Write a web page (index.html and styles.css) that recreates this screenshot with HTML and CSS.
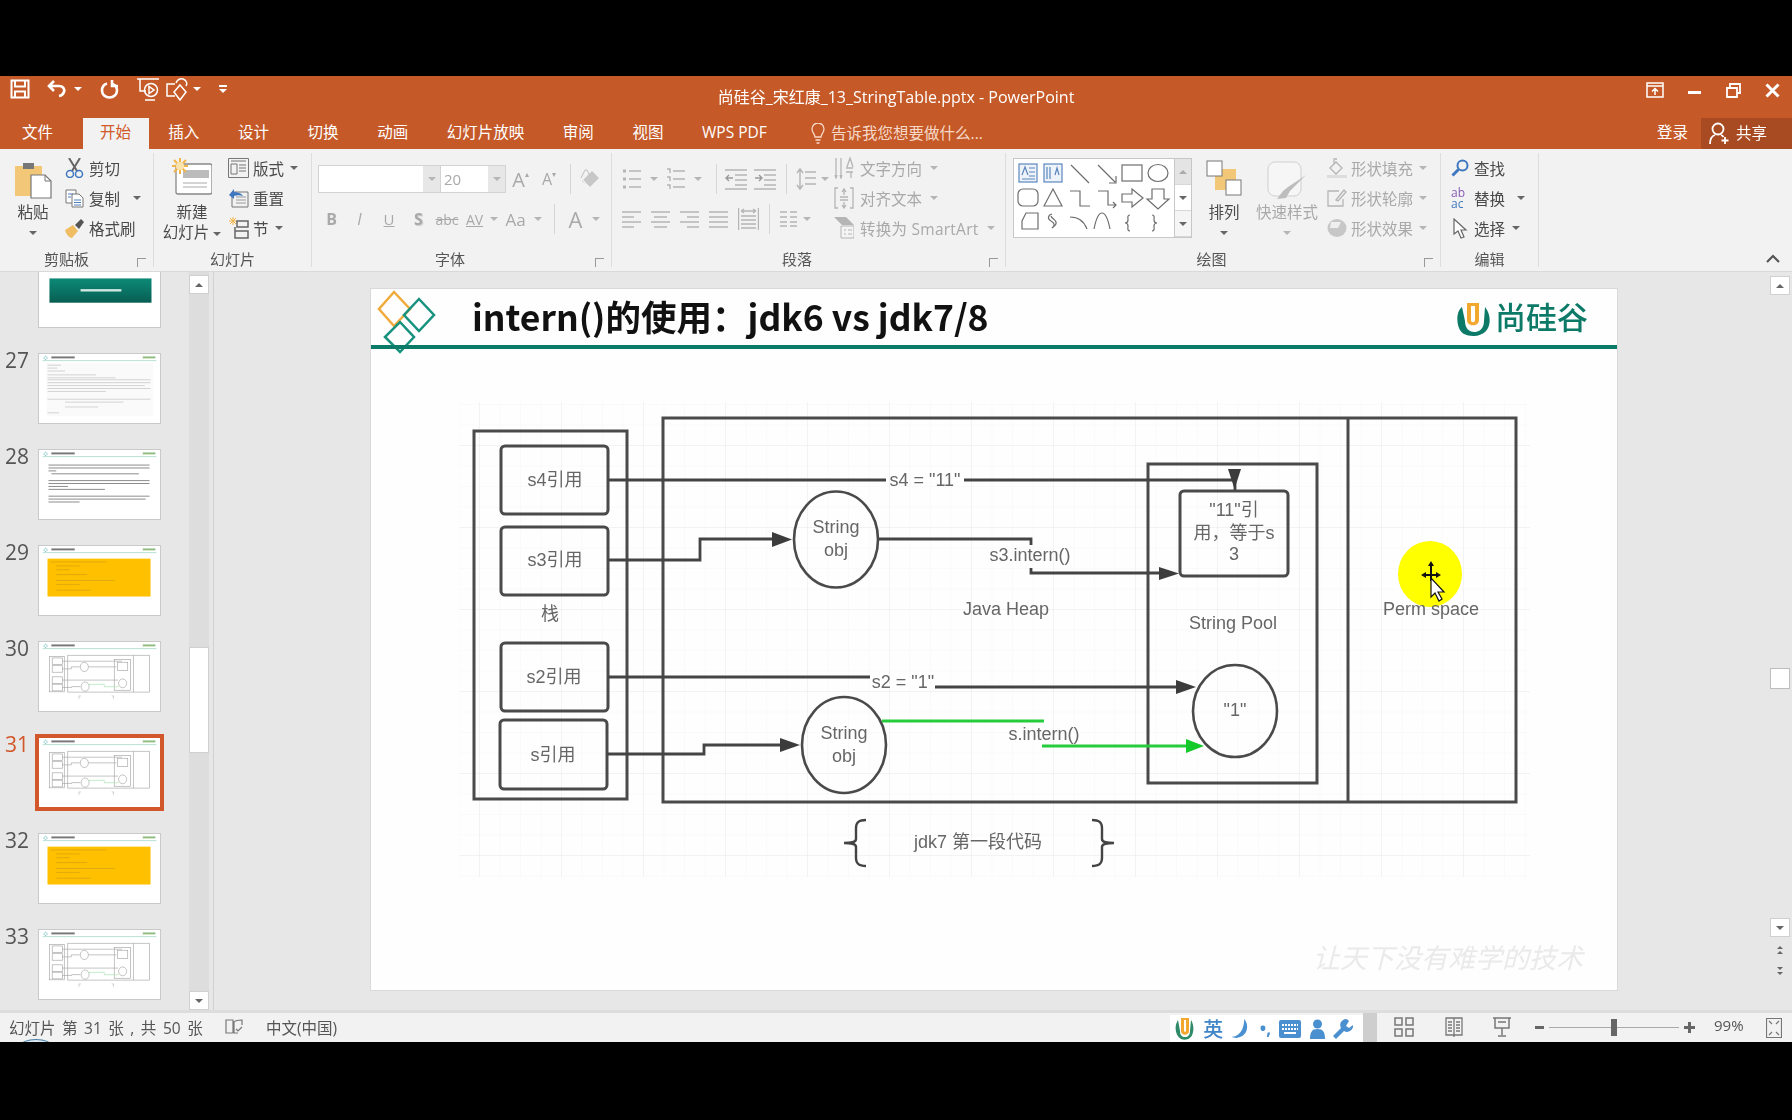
FILE: index.html
```html
<!DOCTYPE html>
<html lang="zh-CN">

<head>
    <meta charset="UTF-8">
    <title>尚硅谷_宋红康_13_StringTable.pptx - PowerPoint</title>
    <link rel="stylesheet" href="styles.css">
</head>

<body>

    <svg class="defs" width="0" height="0">
        <symbol id="thumbHead" viewBox="0 0 123 71">
            <path d="M4 4l2-2 2 2-2 2z" fill="none" stroke="#4aa" stroke-width=".6" />
            <rect x="12" y="2.500" width="24" height="2" fill="#777" />
            <rect x="106" y="2.500" width="13" height="2" fill="#8fbd80" />
            <rect x="3" y="6.500" width="117" height=".8" fill="#a5d6cc" />
        </symbol>
        <symbol id="miniDiagram" viewBox="371 289 1246 701">
            <g fill="none" stroke="#a8a8a8" stroke-width="7">
                <rect x="474" y="431" width="153" height="368" />
                <rect x="663" y="418" width="853" height="384" />
                <path d="M1348 418v384" />
                <rect x="1148" y="464" width="169" height="319" />
                <rect x="501" y="446" width="107" height="68" />
                <rect x="501" y="527" width="107" height="68" />
                <rect x="501" y="643" width="107" height="68" />
                <rect x="501" y="720" width="107" height="69" />
                <ellipse cx="836" cy="540" rx="42" ry="48" />
                <ellipse cx="844" cy="745" rx="42" ry="48" />
                <rect x="1180" y="491" width="108" height="85" />
                <ellipse cx="1235" cy="711" rx="42" ry="46" />
                <path d="M608 480h620M608 560h92v-21h90M879 539h290M608 677h580M607 754h97v-9h90" />
            </g>
            <path d="M882 721h162v25h150" fill="none" stroke="#a5e2ac" stroke-width="7" />
            <path d="M800 842h-20v30M1120 842h20v30" fill="none" stroke="#bbb" stroke-width="7" />
        </symbol>
        <symbol id="yellowBlock" viewBox="0 0 123 71">
            <use href="#thumbHead" width="123" height="71" />
            <rect x="8" y="13" width="106" height="39" fill="#ffc000" />
            <g fill="#dba70f">
                <rect x="11" y="16" width="58" height=".9" />
                <rect x="17" y="20" width="24" height=".9" />
                <rect x="17" y="24" width="14" height=".9" />
                <rect x="17" y="29" width="32" height=".9" />
                <rect x="17" y="35" width="60" height=".9" />
                <rect x="17" y="39" width="24" height=".9" />
                <rect x="17" y="45" width="36" height=".9" />
            </g>
        </symbol>
    </svg>

    <div class="app">
        <div class="black-top"></div>

        <header class="title-bar">
            <div class="qat">
                <svg class="qat-save" width="20" height="20" viewBox="0 0 20 20" fill="none" stroke="#fff" stroke-width="2">
                    <path d="M1.500 1.500h17v17h-17zM5 1.500v6h10v-6M5 18.500v-6h10v6" />
                </svg>
                <svg class="qat-undo" width="20" height="20" viewBox="0 0 20 20" fill="none" stroke="#fff" stroke-width="2.600">
                    <path d="M7 2L2 7l5 5M2.500 7H12c4 0 6 3 5 6-.7 2-2.400 3.500-5 4" />
                </svg>
                <span class="caret white qat-caret1"></span>
                <svg class="qat-redo" width="19" height="20" viewBox="0 0 19 20" fill="none" stroke="#fff" stroke-width="2.600">
                    <path d="M12 1v6h6M13 5.200C15.800 6.500 17 9 17 11.500c0 4-3.300 7-7.500 7S2 15.500 2 11.500C2 8 4 5.500 7 4.500" />
                </svg>
                <svg class="qat-show" width="22" height="24" viewBox="0 0 22 24" fill="none" stroke="#fff" stroke-width="1.500">
                    <path d="M0 2h22M3 2v12h6M8 23h10" />
                    <circle cx="14" cy="13" r="6.500" />
                    <path d="M12 9.500v7l5-3.500z" />
                </svg>
                <svg class="qat-shape" width="24" height="24" viewBox="0 0 24 24" fill="none" stroke="#fff" stroke-width="1.500">
                    <path d="M9 7H1v12h8M10 6c1-3 4-5 7-4 3 1 5 4 3 7" />
                    <path d="M14 8l6 7-6 8-6-8z" />
                </svg>
                <span class="caret white qat-caret2"></span>
                <span class="qat-custom"></span>
            </div>
            <div class="doc-title">尚硅谷_宋红康_13_StringTable.pptx - PowerPoint</div>
            <div class="win-controls">
                <svg width="18" height="16" viewBox="0 0 18 16" fill="none" stroke="#fff" stroke-width="1.500">
                    <path d="M1 1h16v14H1zM1 4h16M9 13V7M6 9.500L9 6.500l3 3" />
                </svg>
                <svg width="14" height="16" viewBox="0 0 14 16" fill="#fff"><rect x="0" y="9" width="13" height="3" /></svg>
                <svg width="15" height="15" viewBox="0 0 15 15" fill="none" stroke="#fff" stroke-width="1.800">
                    <path d="M1 5h10v9H1zM4 5V1h10v9h-3" />
                </svg>
                <svg width="15" height="15" viewBox="0 0 15 15" fill="none" stroke="#fff" stroke-width="3">
                    <path d="M1.500 1.500l12 12M13.500 1.500l-12 12" />
                </svg>
            </div>
        </header>

        <nav class="tabs">
            <span class="tab">文件</span>
            <span class="tab active">开始</span>
            <span class="tab">插入</span>
            <span class="tab">设计</span>
            <span class="tab">切换</span>
            <span class="tab">动画</span>
            <span class="tab">幻灯片放映</span>
            <span class="tab">审阅</span>
            <span class="tab">视图</span>
            <span class="tab">WPS PDF</span>
            <span class="tell-me">
                <svg width="14" height="21" viewBox="0 0 14 21" fill="none" stroke="#f6d9c8" stroke-width="1.300">
                    <path d="M4 14c0-3-3-4-3-8a6 6 0 0 1 12 0c0 4-3 5-3 8zM4.500 17h5M5.500 20h3" />
                </svg>
                告诉我您想要做什么...
            </span>
            <span class="login">登录</span>
            <span class="share">
                <svg width="21" height="23" viewBox="0 0 21 23" fill="none" stroke="#fff" stroke-width="1.800">
                    <circle cx="9" cy="7" r="5.500" />
                    <path d="M1 22c0-5 2-8 5-9M12 13c1 .4 2 1 2.500 2M16 15v7M12.500 18.500h7" />
                </svg>
                共享
            </span>
        </nav>

        <section class="ribbon">
            <div class="group clipboard">
                <div class="group-body">
                    <div class="big-btn paste-btn">
                        <svg width="38" height="40" viewBox="0 0 38 40">
                            <path d="M1 6h27v30H1z" fill="#f2c878" />
                            <rect x="9" y="3" width="11" height="6" fill="#777" />
                            <path d="M17 15h14l6 6v17H17z" fill="#fff" stroke="#777" stroke-width="1.200" />
                            <path d="M31 15v6h6" fill="none" stroke="#777" />
                        </svg>
                        <span>粘贴</span>
                        <span class="caret-line"><span class="caret"></span></span>
                    </div>
                    <div class="small-col">
                        <div class="small-btn">
                            <svg width="19" height="20" viewBox="0 0 19 20" fill="none">
                                <path d="M4 0l8 13M15 0L7 13" stroke="#666" stroke-width="2" />
                                <circle cx="5" cy="16" r="3.500" stroke="#3f78c0" stroke-width="1.500" />
                                <circle cx="14" cy="16" r="3.500" stroke="#3f78c0" stroke-width="1.500" />
                            </svg>
                            <span>剪切</span>
                        </div>
                        <div class="small-btn">
                            <svg width="19" height="19" viewBox="0 0 19 19" fill="#fff" stroke="#777">
                                <path d="M1 1h10v13H1z" />
                                <path d="M7 5h7l4 4v9H7z" />
                                <path d="M3 5h5M3 8h3M9 11h7M9 13.500h7M9 16h7" stroke="#4d7fbd" />
                            </svg>
                            <span>复制</span>
                            <span class="caret copy-caret"></span>
                        </div>
                        <div class="small-btn">
                            <svg width="19" height="20" viewBox="0 0 19 20">
                                <path d="M0 12l8-5 5 6-6 7C4 20 1 16 0 12z" fill="#f0bd62" />
                                <path d="M10 7l6-6 3 3-5 7z" fill="#555" />
                            </svg>
                            <span>格式刷</span>
                        </div>
                    </div>
                </div>
                <div class="group-label">剪贴板</div>
                <span class="launcher"></span>
            </div>

            <div class="group slides">
                <div class="group-body">
                    <div class="big-btn new-slide-btn">
                        <svg width="40" height="40" viewBox="0 0 40 40">
                            <rect x="4" y="6" width="36" height="30" rx="2" fill="#fff" stroke="#888" stroke-width="1.300" />
                            <rect x="11" y="12" width="26" height="8" fill="#bbb" />
                            <path d="M11 25h24M11 29h24" stroke="#aaa" />
                            <path d="M8 0v16M0 8h16M2 2l12 12M14 2L2 14" stroke="#f2b54a" stroke-width="2" />
                            <circle cx="8" cy="8" r="4" fill="#fbe3ac" />
                        </svg>
                        <span>新建</span>
                        <span class="slide-label">幻灯片<span class="caret"></span></span>
                    </div>
                    <div class="small-col">
                        <div class="small-btn">
                            <svg width="21" height="20" viewBox="0 0 21 20" fill="none" stroke="#777">
                                <path d="M.5 .5h20v19H.5zM3 3h15M3 6h6v10H3zM11 7h7M11 10h7M11 13h7" />
                            </svg>
                            <span>版式</span>
                            <span class="caret"></span>
                        </div>
                        <div class="small-btn">
                            <svg width="21" height="20" viewBox="0 0 21 20" fill="none">
                                <path d="M4 4h16v15H4z" stroke="#777" />
                                <path d="M8 9h10M8 12h10M8 15h10" stroke="#999" />
                                <path d="M1 7l5-6v3c4 0 7 1 9 4-3-1-6-1-9 0v3z" fill="#3f78c0" />
                            </svg>
                            <span>重置</span>
                        </div>
                        <div class="small-btn">
                            <svg width="21" height="22" viewBox="0 0 21 22" fill="none">
                                <path d="M5 0v8M1 4h8M2 1l6 6M8 1L2 7" stroke="#f2b54a" />
                                <path d="M9 4h11v6H9zM7 14h13v7H7zM7 10v4" stroke="#666" stroke-width="1.500" />
                            </svg>
                            <span>节</span>
                            <span class="caret"></span>
                        </div>
                    </div>
                </div>
                <div class="group-label">幻灯片</div>
            </div>

            <div class="group font-group">
                <div class="group-body column off">
                    <div class="tool-row first">
                        <span class="font-box"><span class="drop"><span class="caret"></span></span></span>
                        <span class="size-box">20<span class="drop"><span class="caret"></span></span></span>
                        <span class="cell w29 big-a">A<sup>▴</sup></span>
                        <span class="cell w28 small-a">A<sup>▾</sup></span>
                        <span class="cell w14"><span class="sep"></span></span>
                        <span class="cell w26">
                            <svg width="20" height="20" viewBox="0 0 20 20">
                                <path d="M2 12L12 2l7 7-9 9z" fill="#c7c7c7" />
                                <path d="M3 11l6 7" stroke="#fff" />
                                <path d="M1 9L5 1h2l3 6" fill="none" stroke="#c0c0c0" />
                            </svg>
                        </span>
                    </div>
                    <div class="tool-row second">
                        <span class="cell w27 txt-b">B</span>
                        <span class="cell w29 txt-i">I</span>
                        <span class="cell w30 txt-u">U</span>
                        <span class="cell w29 txt-s">S</span>
                        <span class="cell w28 txt-abc">abc</span>
                        <span class="cell w27 txt-av">AV</span>
                        <span class="cell w12"><span class="caret"></span></span>
                        <span class="cell w31 txt-aa">Aa</span>
                        <span class="cell w14"><span class="caret"></span></span>
                        <span class="cell w18"><span class="sep"></span></span>
                        <span class="cell w25 txt-bigA">A</span>
                        <span class="cell w16"><span class="caret"></span></span>
                    </div>
                </div>
                <div class="group-label">字体</div>
                <span class="launcher"></span>
            </div>

            <div class="group para">
                <div class="group-body">
                    <div class="column para-left off">
                        <div class="tool-row first">
                            <svg class="ico" width="20" height="22" viewBox="0 0 20 22" stroke="#b5b5b5" stroke-width="1.400">
                                <path d="M7 3h12M7 11h12M7 19h12" />
                                <path d="M1 3h3M1 11h3M1 19h3" stroke-width="3" />
                            </svg>
                            <span class="cell w24"><span class="caret"></span></span>
                            <svg class="ico" width="20" height="22" viewBox="0 0 20 22" stroke="#b5b5b5" stroke-width="1.400">
                                <path d="M7 3h12M7 11h12M7 19h12M1 1h3v4M1 9h3v4M1 17h3v4" fill="none" />
                            </svg>
                            <span class="cell w24"><span class="caret"></span></span>
                            <span class="cell w12"><span class="sep"></span></span>
                            <svg class="ico gap-l" width="22" height="22" viewBox="0 0 22 22" stroke="#b5b5b5" stroke-width="1.400" fill="none">
                                <path d="M0 2h22M10 7h12M10 12h12M10 17h12M0 21h22" />
                                <path d="M8 10H1M4 7l-3 3 3 3" stroke="#9a9a9a" />
                            </svg>
                            <svg class="ico gap-m" width="22" height="22" viewBox="0 0 22 22" stroke="#b5b5b5" stroke-width="1.400" fill="none">
                                <path d="M0 2h22M10 7h12M10 12h12M10 17h12M0 21h22" />
                                <path d="M1 10h7M5 7l3 3-3 3" stroke="#9a9a9a" />
                            </svg>
                            <span class="cell w20"><span class="sep"></span></span>
                            <svg class="ico" width="20" height="24" viewBox="0 0 20 24" stroke="#b5b5b5" stroke-width="1.400" fill="none">
                                <path d="M9 5h11M9 11h11M9 17h11M4 2v20M1 6l3-4 3 4M1 18l3 4 3-4" />
                            </svg>
                            <span class="cell w18"><span class="caret"></span></span>
                        </div>
                        <div class="tool-row second">
                            <svg class="ico" width="19" height="18" viewBox="0 0 19 18" stroke="#b5b5b5" stroke-width="1.400"><path d="M0 2h19M0 7h12M0 12h19M0 17h12" /></svg>
                            <svg class="ico gap-a" width="19" height="18" viewBox="0 0 19 18" stroke="#b5b5b5" stroke-width="1.400"><path d="M0 2h19M3 7h13M0 12h19M3 17h13" /></svg>
                            <svg class="ico gap-a" width="19" height="18" viewBox="0 0 19 18" stroke="#b5b5b5" stroke-width="1.400"><path d="M0 2h19M7 7h12M0 12h19M7 17h12" /></svg>
                            <svg class="ico gap-a" width="19" height="18" viewBox="0 0 19 18" stroke="#b5b5b5" stroke-width="1.400"><path d="M0 2h19M0 7h19M0 12h19M0 17h19" /></svg>
                            <svg class="ico gap-a" width="21" height="24" viewBox="0 0 21 24" stroke="#b5b5b5" stroke-width="1.400" fill="none"><path d="M.5 1v22M20.500 1v22M3 9h15M3 13h15M3 17h15M3 21h15M3 4h15M3 4l3-2M3 4l3 2M18 4l-3-2M18 4l-3 2" /></svg>
                            <span class="cell w21"><span class="sep"></span></span>
                            <svg class="ico" width="17" height="16" viewBox="0 0 17 16" stroke="#b5b5b5" stroke-width="1.400"><path d="M0 1h7M10 1h7M0 6h7M10 6h7M0 11h7M10 11h7M0 15h7M10 15h7" /></svg>
                            <span class="cell w20"><span class="caret"></span></span>
                        </div>
                    </div>
                    <div class="small-col off para-right">
                        <div class="small-btn">
                            <svg width="20" height="22" viewBox="0 0 20 22" fill="none" stroke="#b5b5b5" stroke-width="1.300">
                                <path d="M2 1v20M7 1v20M1 18l1 3 1-3M6 18l1 3 1-3M12 11h7M12 15h7M13 10l3-9 3 9M17 15v6" />
                            </svg>
                            <span>文字方向</span>
                            <span class="caret"></span>
                        </div>
                        <div class="small-btn">
                            <svg width="20" height="22" viewBox="0 0 20 22" fill="none" stroke="#b5b5b5" stroke-width="1.300">
                                <path d="M4 1H1v20h3M16 1h3v20h-3M6 10h8M6 13h8M10 2v6M8 5l2-3 2 3M10 15v6M8 18l2 3 2-3" />
                            </svg>
                            <span>对齐文本</span>
                            <span class="caret"></span>
                        </div>
                        <div class="small-btn">
                            <svg width="20" height="22" viewBox="0 0 20 22">
                                <path d="M0 0h12l8 8H8z" fill="#b5b5b5" />
                                <path d="M7 9h13v12H7z" fill="#f4f4f4" stroke="#b5b5b5" />
                                <path d="M10 13h2M14 13h4M10 17h2M14 17h4" stroke="#b5b5b5" />
                            </svg>
                            <span class="smartart">转换为 SmartArt</span>
                            <span class="caret"></span>
                        </div>
                    </div>
                </div>
                <div class="group-label">段落</div>
                <span class="launcher"></span>
            </div>

            <div class="group drawing">
                <div class="group-body">
                    <div class="gallery">
                        <svg class="gallery-shapes" width="160" height="80" viewBox="0 0 160 80" fill="none" stroke="#6e6e6e" stroke-width="1.200">
                            <rect x="5" y="6" width="18" height="18" fill="#eef3fa" stroke="#5a86be" />
                            <path d="M8 17l3-8 3 8M15 10h6M15 14h6M15 18h6M8 21h13" stroke="#5a86be" />
                            <rect x="30" y="6" width="18" height="18" fill="#eef3fa" stroke="#5a86be" />
                            <path d="M33 9v12M36 9v12M41 17l2-7 2 7" stroke="#5a86be" />
                            <path d="M57 7l18 18M84 7l17 17M102 18v7h-7" />
                            <rect x="108" y="7" width="20" height="16" />
                            <ellipse cx="144" cy="15" rx="10" ry="8.500" />
                            <rect x="4" y="31" width="20" height="17" rx="5" />
                            <path d="M30 48l9-17 9 17z" />
                            <path d="M56 33h10v15h10M84 33h10v14h8M99 44l3 3-3 3" />
                            <path d="M108 36h10v-5l11 9-11 9v-5h-10z" />
                            <path d="M138 31h12v10h5l-11 10-11-10h5z" />
                            <path d="M8 71v-8l4-8h12v16zM8 71h16" />
                            <path d="M38 56c-4 1-5 5-1 7s4 5 1 7c2-2 5-3 4-6s-4-3-5-6" />
                            <path d="M56 59c8 0 14 4 17 12M80 71c2-10 5-16 8-16s6 6 8 16" />
                            <path d="M116 57c-3 0-2 3-2 5s-1 3-3 3c2 0 3 1 3 3s-1 5 2 5M138 57c3 0 2 3 2 5s1 3 3 3c-2 0-3 1-3 3s1 5-2 5" />
                        </svg>
                        <div class="gallery-scroll">
                            <span class="off-cell"><span class="caret up"></span></span>
                            <span><span class="caret"></span></span>
                            <span class="more"><span class="caret"></span></span>
                        </div>
                    </div>
                    <div class="big-btn arrange-btn">
                        <svg width="36" height="36" viewBox="0 0 36 36">
                            <rect x="9" y="9" width="21" height="21" fill="#f2c878" />
                            <rect x="1" y="1" width="15" height="15" fill="#fff" stroke="#777" />
                            <rect x="20" y="20" width="15" height="15" fill="#fff" stroke="#777" />
                        </svg>
                        <span>排列</span>
                        <span class="caret-line"><span class="caret"></span></span>
                    </div>
                    <div class="big-btn quick-btn off">
                        <svg width="40" height="38" viewBox="0 0 40 38">
                            <rect x="1" y="1" width="33" height="34" rx="7" fill="#f6f6f6" stroke="#d0d0d0" />
                            <path d="M39 14L23 30l-4 7-9 1 6-8 5-4z" fill="#bdbdbd" />
                        </svg>
                        <span>快速样式</span>
                        <span class="caret-line"><span class="caret"></span></span>
                    </div>
                    <div class="small-col off shape-col">
                        <div class="small-btn">
                            <svg width="20" height="20" viewBox="0 0 20 20" fill="none" stroke="#b5b5b5" stroke-width="1.300">
                                <path d="M3 10l6-6 6 6-6 6zM7 6V1h3" />
                                <rect x="0" y="17" width="20" height="3" fill="#ddd" stroke="none" />
                            </svg>
                            <span>形状填充</span>
                            <span class="caret"></span>
                        </div>
                        <div class="small-btn">
                            <svg width="20" height="20" viewBox="0 0 20 20" fill="none" stroke="#b5b5b5" stroke-width="1.300">
                                <path d="M12 3H1v15h15v-7M9 12l8-10 2 2-8 9z" />
                            </svg>
                            <span>形状轮廓</span>
                            <span class="caret"></span>
                        </div>
                        <div class="small-btn">
                            <svg width="20" height="20" viewBox="0 0 20 20">
                                <ellipse cx="10" cy="10" rx="9.500" ry="9" fill="#c7c7c7" />
                                <path d="M4 4h10l-3 6H3z" fill="#efefef" />
                            </svg>
                            <span>形状效果</span>
                            <span class="caret"></span>
                        </div>
                    </div>
                </div>
                <div class="group-label">绘图</div>
                <span class="launcher"></span>
            </div>

            <div class="group editing">
                <div class="group-body">
                    <div class="small-col">
                        <div class="small-btn">
                            <svg width="18" height="18" viewBox="0 0 18 18" fill="none" stroke="#3f78c0">
                                <circle cx="11.500" cy="6.500" r="5" stroke-width="2" />
                                <path d="M7.500 10.500L1.500 16.500" stroke-width="3" />
                            </svg>
                            <span>查找</span>
                        </div>
                        <div class="small-btn">
                            <span class="replace-icon"><b class="ab">ab</b><b class="ac">ac</b></span>
                            <span>替换</span>
                            <span class="caret replace-caret"></span>
                        </div>
                        <div class="small-btn">
                            <svg width="18" height="21" viewBox="0 0 18 21" fill="#fff" stroke="#666" stroke-width="1.200">
                                <path d="M3 1v15l4-3 3 7 3-1-3-7h5z" />
                            </svg>
                            <span>选择</span>
                            <span class="caret"></span>
                        </div>
                    </div>
                </div>
                <div class="group-label">编辑</div>
            </div>

            <svg class="collapse" width="14" height="9" viewBox="0 0 14 9" fill="none" stroke="#555" stroke-width="2.200">
                <path d="M1 8l6-6 6 6" />
            </svg>
        </section>

        <main class="workspace">
            <aside class="thumb-panel">
                <div class="thumb-list">
                    <div class="thumb-row">
                        <span class="num"></span>
                        <div class="thumb">
                            <svg viewBox="0 0 123 71">
                                <defs>
                                    <linearGradient id="teal" x1="0" y1="0" x2="0" y2="1">
                                        <stop offset="0" stop-color="#0d8a78" />
                                        <stop offset="1" stop-color="#075e52" />
                                    </linearGradient>
                                </defs>
                                <rect x="10" y="21" width="105" height="25" fill="url(#teal)" />
                                <rect x="42" y="32" width="42" height="2.500" fill="#cfe6e0" />
                            </svg>
                        </div>
                    </div>
                    <div class="thumb-row">
                        <span class="num">27</span>
                        <div class="thumb">
                            <svg viewBox="0 0 123 71">
                                <use href="#thumbHead" width="123" height="71" />
                                <rect x="7" y="9" width="110" height="55" fill="#fafafa" />
                                <g fill="#d2d2d2">
                                    <rect x="8" y="11" width="14" height="1" /><rect x="8" y="14" width="10" height="1" /><rect x="8" y="17" width="18" height="1" />
                                    <rect x="8" y="21" width="50" height="1" /><rect x="8" y="24" width="70" height="1" /><rect x="8" y="26" width="106" height="1" />
                                    <rect x="8" y="29" width="106" height="1" /><rect x="8" y="32" width="100" height="1" /><rect x="8" y="35" width="106" height="1" />
                                    <rect x="8" y="38" width="60" height="1" /><rect x="8" y="46" width="106" height="1" /><rect x="26" y="49" width="60" height="1" />
                                    <rect x="26" y="54" width="34" height="1" /><rect x="8" y="60" width="12" height="1" />
                                </g>
                            </svg>
                        </div>
                    </div>
                    <div class="thumb-row">
                        <span class="num">28</span>
                        <div class="thumb">
                            <svg viewBox="0 0 123 71">
                                <use href="#thumbHead" width="123" height="71" />
                                <g fill="#8a8a8a">
                                    <rect x="9" y="15" width="104" height="1" /><rect x="9" y="18" width="104" height="1" /><rect x="9" y="21" width="8" height="1" />
                                    <rect x="12" y="24" width="90" height="1" /><rect x="9" y="31" width="104" height="1" /><rect x="9" y="34" width="104" height="1" />
                                    <rect x="9" y="37" width="20" height="1" /><rect x="9" y="40" width="58" height="1" /><rect x="9" y="47" width="104" height="1" />
                                    <rect x="9" y="50" width="100" height="1" /><rect x="9" y="53" width="32" height="1" />
                                </g>
                            </svg>
                        </div>
                    </div>
                    <div class="thumb-row">
                        <span class="num">29</span>
                        <div class="thumb"><svg viewBox="0 0 123 71"><use href="#yellowBlock" width="123" height="71" /></svg></div>
                    </div>
                    <div class="thumb-row">
                        <span class="num">30</span>
                        <div class="thumb">
                            <svg viewBox="0 0 123 71">
                                <use href="#thumbHead" width="123" height="71" />
                                <use href="#miniDiagram" width="123" height="71" />
                            </svg>
                        </div>
                    </div>
                    <div class="thumb-row selected">
                        <span class="num">31</span>
                        <div class="thumb">
                            <svg viewBox="0 0 123 71">
                                <use href="#thumbHead" width="123" height="71" />
                                <use href="#miniDiagram" width="123" height="71" />
                            </svg>
                        </div>
                    </div>
                    <div class="thumb-row">
                        <span class="num">32</span>
                        <div class="thumb"><svg viewBox="0 0 123 71"><use href="#yellowBlock" width="123" height="71" /></svg></div>
                    </div>
                    <div class="thumb-row">
                        <span class="num">33</span>
                        <div class="thumb">
                            <svg viewBox="0 0 123 71">
                                <use href="#thumbHead" width="123" height="71" />
                                <use href="#miniDiagram" width="123" height="71" />
                            </svg>
                        </div>
                    </div>
                </div>
                <div class="thumb-scroll">
                    <span class="scroll-btn"><span class="caret up dark"></span></span>
                    <span class="scroll-thumb"></span>
                    <span class="scroll-btn bottom"><span class="caret dark"></span></span>
                </div>
            </aside>

            <div class="canvas">
                <div class="slide">
                    <svg class="slide-svg" width="1246" height="701" viewBox="371 289 1246 701">
                        <defs>
                            <pattern id="minorGrid" x="479" y="445" width="20.500" height="20.500" patternUnits="userSpaceOnUse">
                                <path d="M0 0v20.500M0 0h20.500" stroke="#f6f6f6" fill="none" />
                            </pattern>
                            <pattern id="majorGrid" x="479" y="445" width="82" height="82" patternUnits="userSpaceOnUse">
                                <path d="M0 0v82M0 0h82" stroke="#ebebeb" fill="none" />
                            </pattern>
                        </defs>

                        <!-- header -->
                        <g fill="none" stroke-width="2.500">
                            <path d="M394 292l16 17-16 17-15-17z" stroke="#f0ab3c" />
                            <path d="M419 299l15 16-15 16-15-16z" stroke="#17927f" />
                            <path d="M400 322l14 15-14 15-15-15z" stroke="#17927f" />
                        </g>
                        <text class="slide-title" x="472" y="331">intern()的使用：jdk6 vs jdk7/8</text>
                        <path d="M1462 307c-7 5-6 23 2 27 8 4 20 2 24-6 3-6 2-15-3-21l-1 14c0 8-5 11-10 11s-9-4-9-11z" fill="#0d7a68" />
                        <path d="M1467 303h12v17c0 7-12 7-12 0z" fill="#f2a72e" />
                        <path d="M1471 306h4v14c0 3-4 3-4 0z" fill="#fff" />
                        <text class="logo-text" x="1495" y="329">尚硅谷</text>
                        <rect x="371" y="345" width="1246" height="4" fill="#0c7a68" />

                        <!-- diagram grid -->
                        <rect x="459" y="402" width="1071" height="475" fill="url(#minorGrid)" />
                        <rect x="459" y="402" width="1071" height="475" fill="url(#majorGrid)" />

                        <!-- containers -->
                        <g fill="none" stroke="#4a4a4a" stroke-width="3">
                            <rect x="474" y="431" width="153" height="368" />
                            <rect x="663" y="418" width="853" height="384" />
                            <path d="M1348 418v384" />
                            <rect x="1148" y="464" width="169" height="319" />
                            <rect x="501" y="446" width="107" height="68" rx="4" />
                            <rect x="501" y="527" width="107" height="68" rx="4" />
                            <rect x="501" y="643" width="107" height="68" rx="4" />
                            <rect x="500" y="720" width="107" height="69" rx="4" />
                            <rect x="1180" y="491" width="108" height="85" rx="4" />
                            <ellipse cx="836" cy="539.500" rx="42" ry="48" stroke-width="2.600" />
                            <ellipse cx="844" cy="745" rx="42" ry="48" stroke-width="2.600" />
                            <ellipse cx="1235" cy="711" rx="42" ry="46" stroke-width="2.600" />
                        </g>

                        <!-- connectors -->
                        <g fill="none" stroke="#444" stroke-width="2.800">
                            <path d="M608 480h278M964 480h271v10" />
                            <path d="M608 560h92v-21h74" />
                            <path d="M879 539h152v6M1031 568v5h130" />
                            <path d="M608 677h262M935 687h243" />
                            <path d="M607 754h97v-9h78" />
                            <path d="M866 820c-8 0-10 3-10 8v11c0 3-3 4-12 4 9 0 12 1 12 4v11c0 5 2 8 10 8" stroke-width="2.400" />
                            <path d="M1092 820c8 0 10 3 10 8v11c0 3 3 4 12 4-9 0-12 1-12 4v11c0 5-2 8-10 8" stroke-width="2.400" />
                        </g>
                        <g fill="#3c3c3c">
                            <path d="M772 532l20 7.500-20 7.500z" />
                            <path d="M1159 567l20 6.500-20 6.500z" />
                            <path d="M1228 469h13l-6.500 20z" />
                            <path d="M1176 680l20 7-20 7z" />
                            <path d="M780 738l20 7-20 7z" />
                        </g>
                        <path d="M882 721h162M1042 746h146" fill="none" stroke="#26cc3c" stroke-width="3" />
                        <path d="M1186 739l18 7-18 7z" fill="#14c92a" />

                        <!-- labels -->
                        <g class="diagram-text" text-anchor="middle">
                            <text x="555" y="486">s4引用</text>
                            <text x="555" y="566">s3引用</text>
                            <text x="550" y="620">栈</text>
                            <text x="554" y="683">s2引用</text>
                            <text x="553" y="761">s引用</text>
                            <text x="925" y="486">s4 = "11"</text>
                            <text x="903" y="688">s2 = "1"</text>
                            <text x="836" y="533">String</text>
                            <text x="836" y="556">obj</text>
                            <text x="844" y="739">String</text>
                            <text x="844" y="762">obj</text>
                            <text x="1030" y="561">s3.intern()</text>
                            <text x="1044" y="740">s.intern()</text>
                            <text x="1006" y="615">Java Heap</text>
                            <text x="1233" y="629">String Pool</text>
                            <text x="1234" y="516">"11"引</text>
                            <text x="1234" y="539">用，等于s</text>
                            <text x="1234" y="560">3</text>
                            <text x="1235" y="716">"1"</text>
                            <text x="978" y="848">jdk7 第一段代码</text>
                        </g>

                        <text class="watermark" x="1313" y="968">让天下没有难学的技术</text>

                        <!-- pointer highlight -->
                        <ellipse cx="1430" cy="574" rx="32" ry="33" fill="#ffff00" />
                        <text class="diagram-text" x="1431" y="615" text-anchor="middle">Perm space</text>
                        <g fill="#111">
                            <path d="M1431 561l3 5h-6zM1421 575l5-3v6zM1441 575l-5-3v6z" />
                            <path d="M1430 565h2v16h-2zM1424 574h14v2h-14z" />
                        </g>
                        <path d="M1431 578v19l4-4 4 8 3-2-4-7h6z" fill="#fff" stroke="#111" stroke-width="1.200" />
                    </svg>
                </div>
                <div class="side-scroll">
                    <span class="scroll-btn"><span class="caret up dark"></span></span>
                    <span class="side-thumb"></span>
                    <span class="scroll-btn"><span class="caret dark"></span></span>
                    <span class="page-btn"><span class="caret up dark small"></span><span class="caret up dark small"></span></span>
                    <span class="page-btn"><span class="caret dark small"></span><span class="caret dark small"></span></span>
                </div>
            </div>
        </main>

        <footer class="status-bar">
            <span class="status-count">幻灯片 第 31 张 , 共 50 张</span>
            <svg class="status-note" width="18" height="16" viewBox="0 0 18 16" fill="none" stroke="#777" stroke-width="1.200">
                <path d="M1 1h7v13H1zM9 14V3c1-1 4-2 8-2v5M9 14h4M17 8l-4 4-2-2" />
            </svg>
            <span class="status-lang">中文(中国)</span>
            <span class="taskbar-arc"></span>
            <div class="ime">
                <svg width="20" height="24" viewBox="0 0 20 24">
                    <path d="M3 3c-4 6-3 15 3 19 5 2 11 0 12-7 1-4 0-9-2-12l-1 11c0 4-2 6-5 6s-5-2-5-6z" fill="#2f8a68" />
                    <path d="M6 1h8v13c0 5-8 5-8 0z" fill="#f2a72e" />
                    <path d="M9 3h2v11c0 1-2 1-2 0z" fill="#fff" />
                </svg>
                <span class="ime-lang">英</span>
                <svg width="20" height="20" viewBox="0 0 18 18" fill="#4a90d0"><path d="M11 0c5 6 3 16-7 17-2 0-3 0-4-1 6 0 11-6 11-16z" /></svg>
                <span class="ime-punct">•,</span>
                <svg width="22" height="18" viewBox="0 0 22 18">
                    <rect width="22" height="18" rx="2" fill="#4a90d0" />
                    <path d="M3 5h16M3 9h16" stroke="#fff" stroke-width="2" stroke-dasharray="2 1" />
                    <path d="M5 13h12" stroke="#fff" stroke-width="2" />
                </svg>
                <svg width="15" height="20" viewBox="0 0 15 20" fill="#4a90d0"><circle cx="7.500" cy="5" r="4.500" /><path d="M0 20c0-7 2-10 7.500-10S15 13 15 20z" /></svg>
                <svg width="20" height="20" viewBox="0 0 20 20" fill="#4a90d0"><path d="M13 0a6 6 0 0 0-5 9L0 17l3 3 8-8a6 6 0 0 0 9-6l-4 3-3-2 3-5c-1-1-2-2-3-2z" /></svg>
            </div>
            <span class="ime-grip"></span>
            <div class="view-btns">
                <svg width="20" height="20" viewBox="0 0 20 20" fill="none" stroke="#777" stroke-width="1.500">
                    <path d="M1 1h7v7H1zM12 1h7v7h-7zM1 12h7v7H1zM12 12h7v7h-7z" />
                </svg>
                <svg width="18" height="20" viewBox="0 0 18 20" fill="none" stroke="#777" stroke-width="1.300">
                    <path d="M1 1h16v17H1zM9 1v19M3 5h4M3 8h4M3 11h4M3 14h4M11 5h4M11 8h4M11 11h4M11 14h4" />
                </svg>
                <svg width="18" height="20" viewBox="0 0 18 20" fill="none" stroke="#777" stroke-width="1.500">
                    <path d="M0 1h18M2 1v10h14V1M9 11v7M5 19h8M5 5h8" />
                </svg>
            </div>
            <div class="zoom-ctl">
                <span class="zoom-minus"></span>
                <span class="zoom-track"><span class="zoom-knob"></span></span>
                <span class="zoom-plus"></span>
            </div>
            <span class="zoom-pct">99%</span>
            <svg class="fit-btn" width="16" height="20" viewBox="0 0 16 20" fill="none" stroke="#777" stroke-width="1.200">
                <path d="M.5 .5h15v19H.5z" />
                <path d="M3 3l3 3M13 3l-3 3M3 17l3-3M13 17l-3-3" />
            </svg>
        </footer>
    </div>

</body>

</html>
```

FILE: styles.css
```css
* {
    box-sizing: border-box;
}

body {
    margin: 0;
    background: #000;
    font-family: "Open Sans", "Noto Sans CJK SC", sans-serif;
    color: #444;
}

.defs {
    position: absolute;
}

.app {
    width: 1792px;
    height: 1120px;
    overflow: hidden;
    display: flex;
    flex-direction: column;
    filter: blur(0.6px);
}

.black-top {
    height: 76px;
    flex: none;
}

/* title bar */
.title-bar {
    height: 42px;
    flex: none;
    background: #c55a28;
    display: flex;
    align-items: center;
    position: relative;
    color: #fff;
}

.qat {
    display: flex;
    align-items: center;
    margin-left: 10px;
    margin-top: -16px;
}

.qat-undo {
    margin-left: 17px;
}

.qat-caret1 {
    margin-left: 7px;
}

.qat-redo {
    margin-left: 18px;
}

.qat-show {
    margin-left: 18px;
}

.qat-shape {
    margin-left: 7px;
}

.qat-caret2 {
    margin-left: 3px;
}

.qat-custom {
    width: 8px;
    height: 8px;
    margin-left: 18px;
    border-top: 2px solid #fff;
    position: relative;
}

.qat-custom::after {
    content: "";
    position: absolute;
    left: 0;
    top: 2px;
    border: 4px solid transparent;
    border-top-color: #fff;
}

.doc-title {
    position: absolute;
    left: 0;
    right: 0;
    top: 9px;
    text-align: center;
    font-size: 16px;
    line-height: 24px;
    color: #fff;
}

.win-controls {
    margin-left: auto;
    display: flex;
    align-items: center;
    gap: 24px;
    margin-right: 12px;
    margin-top: -14px;
}

/* tabs */
.tabs {
    height: 31px;
    flex: none;
    background: #c55a28;
    display: flex;
    color: #fff;
    font-size: 15.5px;
    line-height: 29px;
}

.tab {
    padding: 0 19.3px;
    white-space: nowrap;
}

.tab:first-child {
    width: 83px;
    padding: 0 0 0 22px;
}

.tab.active {
    background: #f1f2f1;
    color: #d1592a;
    width: 66px;
    padding: 0 17px;
}

.tell-me {
    margin-left: 25px;
    display: flex;
    align-items: center;
    gap: 6px;
    font-size: 15.5px;
    color: #f6d9c8;
}

.login {
    margin-left: auto;
    margin-right: 13px;
}

.share {
    width: 91px;
    background: #a94b22;
    display: flex;
    align-items: center;
    padding-left: 8px;
    gap: 6px;
}

/* ribbon */
.ribbon {
    height: 123px;
    flex: none;
    background: #f1f2f1;
    border-bottom: 1px solid #d8d9d8;
    display: flex;
    padding-top: 4px;
    position: relative;
    font-size: 15.5px;
    color: #4a4a4a;
}

.group {
    height: 114px;
    display: flex;
    flex-direction: column;
    position: relative;
    border-right: 1px solid #dcdddc;
}

.group-body {
    height: 97px;
    display: flex;
}

.group-label {
    height: 17px;
    line-height: 19px;
    text-align: center;
    font-size: 15px;
    color: #555;
}

.clipboard .group-label {
    padding-right: 20px;
}

.font-group .group-label,
.para .group-label,
.drawing .group-label {
    padding-right: 23px;
}

.launcher {
    position: absolute;
    right: 7px;
    bottom: 0;
    width: 9px;
    height: 9px;
    border-left: 1px solid #999;
    border-top: 1px solid #999;
}

.clipboard {
    width: 154px;
}

.slides {
    width: 158px;
}

.font-group {
    width: 300px;
}

.para {
    width: 394px;
}

.drawing {
    width: 435px;
}

.editing {
    width: 98px;
}

.big-btn {
    display: flex;
    flex-direction: column;
    align-items: center;
    line-height: 20px;
    white-space: nowrap;
    flex: none;
}

.big-btn svg {
    height: 40px;
    margin-bottom: 8px;
    flex: none;
}

.paste-btn {
    width: 56px;
    margin-left: 5px;
    padding-top: 7px;
}

.paste-btn svg {
    margin-bottom: 2px;
}

.new-slide-btn {
    width: 68px;
    margin-left: 4px;
    padding-top: 5px;
}

.new-slide-btn svg {
    margin-bottom: 4px;
}

.caret-line {
    line-height: 18px;
    display: block;
}

.slide-label .caret {
    margin-left: 4px;
}

.small-col {
    display: flex;
    flex-direction: column;
    flex: none;
}

.clipboard .small-col {
    margin-left: 4px;
}

.slides .small-col {
    margin-left: 2px;
}

.slides .small-btn {
    gap: 4px;
}

.small-btn {
    height: 30px;
    display: flex;
    align-items: center;
    gap: 5px;
    white-space: nowrap;
}

.small-btn .caret {
    margin-left: 2px;
}

.small-btn svg {
    flex: none;
}

.off,
.off .small-btn {
    color: #a9a9a9;
}

.smartart {
    letter-spacing: 0.25px;
}

.caret {
    display: inline-block;
    width: 0;
    height: 0;
    border: 4px solid transparent;
    border-top-color: #666;
    border-bottom-width: 0;
    vertical-align: middle;
}

.caret.up {
    border-top-width: 0;
    border-bottom-width: 4px;
    border-top-color: transparent;
    border-bottom-color: #aaa;
}

.caret.white {
    border-top-color: #fff;
}

.off .caret {
    border-top-color: #b5b5b5;
}

.small-btn .copy-caret {
    margin-left: 8px;
}

.small-btn .replace-caret {
    margin-left: 7px;
}

/* font group */
.column {
    flex-direction: column;
    display: flex;
}

.font-group .group-body {
    padding-left: 6px;
}

.tool-row {
    display: flex;
    align-items: center;
    flex: none;
}

.tool-row.first {
    height: 28px;
    margin-top: 12px;
}

.tool-row.second {
    height: 28px;
    margin-top: 12px;
}

.cell {
    display: flex;
    align-items: center;
    justify-content: center;
    flex: none;
    height: 100%;
    color: #a9a9a9;
}

.w12 { width: 12px; }
.w14 { width: 14px; }
.w16 { width: 16px; }
.w18 { width: 18px; }
.w20 { width: 20px; }
.w21 { width: 21px; }
.w24 { width: 24px; }
.w25 { width: 25px; }
.w26 { width: 26px; }
.w27 { width: 27px; }
.w28 { width: 28px; }
.w29 { width: 29px; }
.w30 { width: 30px; }
.w31 { width: 31px; }

.sep {
    width: 1px;
    height: 30px;
    background: #d5d6d5;
}

.font-box,
.size-box {
    height: 28px;
    background: #fff;
    border: 1px solid #d2d3d2;
    display: flex;
    align-items: center;
    justify-content: flex-end;
    flex: none;
}

.font-box {
    width: 123px;
}

.size-box {
    width: 65px;
    justify-content: space-between;
    padding-left: 3px;
    font-size: 15px;
    color: #a9a9a9;
    border-left: 0;
}

.drop {
    width: 17px;
    height: 100%;
    background: #e6e7e6;
    display: flex;
    align-items: center;
    justify-content: center;
}

.big-a {
    font-size: 20px;
}

.small-a {
    font-size: 16px;
}

.big-a sup,
.small-a sup {
    font-size: 8px;
    margin-top: -12px;
}

.txt-b {
    font-weight: 700;
    font-size: 16px;
}

.txt-i {
    font-style: italic;
    font-size: 16px;
}

.txt-u {
    text-decoration: underline;
    font-size: 15px;
}

.txt-s {
    font-size: 16px;
    font-weight: 700;
    text-shadow: 1px 1px 1px #ccc;
}

.txt-abc {
    font-size: 14px;
    text-decoration: line-through;
}

.txt-av {
    font-size: 14px;
    text-decoration: underline;
}

.txt-aa {
    font-size: 17px;
}

.txt-bigA {
    font-size: 22px;
}

/* paragraph group */
.para-left {
    width: 222px;
    padding-left: 10px;
    flex: none;
}

.para-right .small-btn {
    gap: 6px;
}

.para-right svg {
    width: 20px;
}

.ico {
    flex: none;
}

.gap-l {
    margin-left: 3px;
}

.gap-m {
    margin-left: 7px;
}

.gap-a {
    margin-left: 10px;
}

/* drawing group */
.gallery {
    display: flex;
    margin: 5px 0 0 7px;
    height: 80px;
    width: 179px;
    flex: none;
    border: 1px solid #c6c7c6;
    background: #fff;
}

.gallery-shapes {
    flex: none;
    margin-top: -1px;
}

.gallery-scroll {
    flex: 1;
    display: flex;
    flex-direction: column;
    border-left: 1px solid #c6c7c6;
}

.gallery-scroll > span {
    flex: 1;
    display: flex;
    align-items: center;
    justify-content: center;
    border-bottom: 1px solid #d6d7d6;
}

.gallery-scroll .off-cell {
    background: #e3e4e3;
}

.more {
    background: #f5f5f5;
}

.arrange-btn {
    width: 50px;
    margin-left: 7px;
    padding-top: 7px;
}

.arrange-btn svg {
    height: 36px;
    margin-bottom: 6px;
}

.quick-btn {
    width: 68px;
    margin-left: 4px;
    padding-top: 8px;
}

.quick-btn svg {
    height: 38px;
    margin-bottom: 3px;
}

.shape-col {
    margin-left: 6px;
}

.shape-col .small-btn {
    gap: 4px;
}

.editing .small-col {
    margin-left: 10px;
}

.editing .small-btn {
    gap: 5px;
}

.replace-icon {
    width: 18px;
    height: 24px;
    display: flex;
    flex-direction: column;
    font-size: 12px;
    line-height: 11px;
    font-weight: 400;
    justify-content: center;
}

.ab {
    font-weight: 400;
    color: #8a5bb5;
}

.ac {
    font-weight: 400;
    color: #3f78c0;
}

.collapse {
    position: absolute;
    right: 12px;
    bottom: 8px;
}

/* workspace */
.workspace {
    height: 741px;
    flex: none;
    background: #e6e7e6;
    display: flex;
    border-bottom: 3px solid #dcdddc;
}

.thumb-panel {
    width: 214px;
    flex: none;
    display: flex;
    border-right: 1px solid #d0d1d0;
    overflow: hidden;
}

.thumb-list {
    width: 189px;
    flex: none;
    margin-top: -40px;
}

.thumb-row {
    height: 96px;
    display: flex;
    padding-top: 25px;
}

.num {
    width: 38px;
    padding-left: 5px;
    font-size: 21px;
    line-height: 24px;
    color: #555;
    margin-top: -5px;
    flex: none;
}

.selected .num {
    color: #d2572a;
}

.thumb {
    width: 123px;
    height: 71px;
    background: #fff;
    border: 1px solid #c8c9c8;
    flex: none;
}

.thumb svg {
    display: block;
    width: 100%;
    height: 100%;
}

.selected .thumb {
    outline: 4px solid #d2572a;
    outline-offset: -1px;
}

.thumb-scroll {
    width: 20px;
    background: #dcdddc;
    display: flex;
    flex-direction: column;
    padding-top: 3px;
    height: 738px;
    flex: none;
}

.scroll-btn {
    height: 19px;
    background: #fff;
    border: 1px solid #cfd0cf;
    display: flex;
    align-items: center;
    justify-content: center;
    flex: none;
}

.scroll-btn.bottom {
    margin-top: auto;
}

.caret.dark {
    border-top-color: #666;
}

.caret.up.dark {
    border-top-color: transparent;
    border-bottom-color: #666;
}

.caret.small {
    border-width: 3px;
}

.caret.up.small {
    border-top-width: 0;
}

.caret.small:not(.up) {
    border-bottom-width: 0;
}

.scroll-thumb {
    height: 106px;
    margin-top: 353px;
    background: #fff;
    border: 1px solid #cfd0cf;
    flex: none;
}

.canvas {
    flex: 1;
    display: flex;
}

.slide {
    width: 1246px;
    height: 701px;
    margin: 17px 0 0 157px;
    background: #fdfefd;
    box-shadow: 0 0 0 1px #d8d9d8;
    flex: none;
}

.slide-svg {
    display: block;
}

.slide-title {
    font-family: "Noto Sans CJK SC", sans-serif;
    font-weight: 700;
    font-size: 35.5px;
    fill: #111;
}

.logo-text {
    font-family: "Noto Sans CJK SC", sans-serif;
    font-weight: 500;
    font-size: 31px;
    fill: #0d7a68;
}

.diagram-text {
    font-family: "Liberation Sans", "Noto Sans CJK SC", sans-serif;
    font-size: 18px;
    fill: #666;
}

.watermark {
    font-family: "Noto Sans CJK SC", sans-serif;
    font-size: 27px;
    font-style: italic;
    fill: #e9eae9;
}

.side-scroll {
    width: 20px;
    margin: 4px 0 0 153px;
    display: flex;
    flex-direction: column;
    flex: none;
}

.side-thumb {
    height: 21px;
    margin: 373px 0 229px;
    background: #fff;
    border: 1px solid #bcbdbc;
    flex: none;
}

.page-btn {
    height: 16px;
    margin-top: 5px;
    display: flex;
    flex-direction: column;
    align-items: center;
    justify-content: center;
    gap: 2px;
    flex: none;
}

/* status bar */
.status-bar {
    height: 29px;
    flex: none;
    background: #f1f2f1;
    display: flex;
    align-items: center;
    font-size: 15.5px;
    color: #555;
    position: relative;
    padding-bottom: 1px;
    overflow: hidden;
}

.status-count {
    margin-left: 9px;
    width: 216px;
    white-space: nowrap;
    flex: none;
    word-spacing: 2.5px;
}

.status-note {
    flex: none;
}

.status-lang {
    margin-left: 23px;
    flex: none;
    white-space: nowrap;
    font-size: 15.5px;
}

.taskbar-arc {
    position: absolute;
    left: 20px;
    top: 26px;
    width: 32px;
    height: 14px;
    border: 1px solid #4a7fa8;
    border-radius: 50%;
    background: #dce8f2;
}

.ime {
    position: absolute;
    left: 1170px;
    top: 2px;
    width: 193px;
    height: 27px;
    background: #fff;
    display: flex;
    align-items: center;
    padding-left: 5px;
    justify-content: space-between;
    padding-right: 10px;
}

.ime-lang {
    font-size: 20px;
    font-weight: 500;
    color: #3f86c8;
}

.ime-punct {
    font-size: 17px;
    font-weight: 700;
    color: #4a90d0;
}

.ime-grip {
    position: absolute;
    left: 1363px;
    top: 0;
    width: 14px;
    height: 29px;
    background: #cdcecd;
}

.view-btns {
    position: absolute;
    left: 1394px;
    top: 4px;
    width: 117px;
    display: flex;
    justify-content: space-between;
}

.zoom-ctl {
    position: absolute;
    left: 1535px;
    top: 0;
    height: 29px;
    width: 162px;
    display: flex;
    align-items: center;
}

.zoom-minus {
    width: 9px;
    height: 3px;
    background: #666;
    flex: none;
}

.zoom-track {
    width: 130px;
    height: 1px;
    background: #a9a9a9;
    margin: 0 5px;
    position: relative;
    flex: none;
}

.zoom-knob {
    position: absolute;
    left: 62px;
    top: -8px;
    width: 6px;
    height: 17px;
    background: #666;
}

.zoom-plus {
    width: 11px;
    height: 11px;
    background: linear-gradient(#666, #666) center / 11px 3px no-repeat, linear-gradient(#666, #666) center / 3px 11px no-repeat;
    flex: none;
}

.zoom-pct {
    position: absolute;
    left: 1714px;
    top: 2px;
    font-size: 15px;
}

.fit-btn {
    position: absolute;
    left: 1766px;
    top: 5px;
}
```
